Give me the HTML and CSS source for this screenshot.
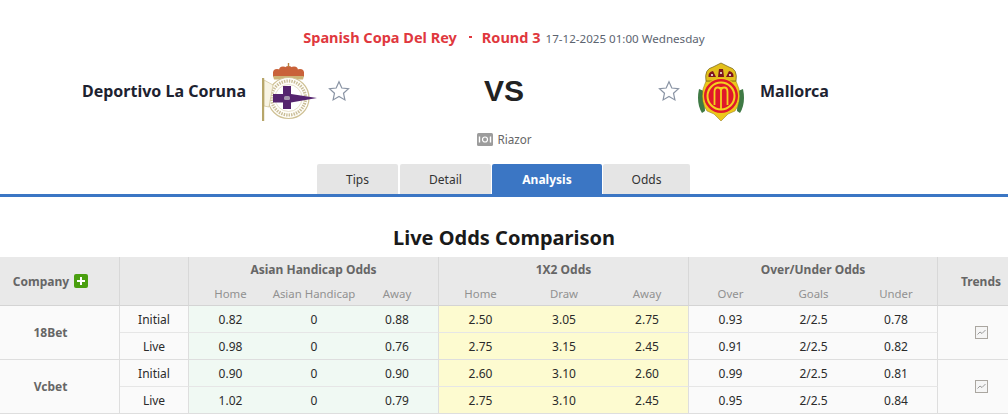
FILE: index.html
```html
<!DOCTYPE html>
<html lang="en">
<head>
<meta charset="utf-8">
<title>Deportivo La Coruna vs Mallorca</title>
<link rel="stylesheet" href="styles.css">
</head>
<body>
<header class="match">
  <div class="meta">
    <span class="league">Spanish Copa Del Rey</span>
    <span class="dot"></span>
    <span class="league">Round 3</span>
    <span class="date">17-12-2025 01:00 Wednesday</span>
  </div>
  <div class="teams">
    <div class="team team-home">
      <span class="team-name">Deportivo La Coruna</span>
      <svg class="crest crest-home" viewBox="0 0 56 62" aria-hidden="true">
        <g fill="#c9623a">
          <circle cx="15" cy="12" r="4"/><circle cx="21" cy="9.500" r="4"/><circle cx="26.500" cy="9" r="4"/><circle cx="32" cy="9.500" r="4"/><circle cx="38" cy="12" r="4"/>
          <rect x="11" y="11" width="31" height="5"/>
        </g>
        <rect x="25.800" y="2" width="1.400" height="4" fill="#b8803f"/>
        <path d="M11 15 H42 L41 18.500 H12 Z" fill="#cdb477"/>
        <circle cx="26.500" cy="37" r="20.500" fill="#fffefa" stroke="#cfc195" stroke-width="1.200"/>
        <circle cx="26.500" cy="37" r="17" fill="none" stroke="#b3a26f" stroke-width="3.200" stroke-dasharray="1.400 1.100" opacity=".7"/>
        <circle cx="26.500" cy="37" r="13.500" fill="#fff" stroke="#ddd3b2" stroke-width=".7"/>
        <path d="M2 19 L11 24 L7 46 L2 45 Z" fill="#f8f4e4" stroke="#cfc195" stroke-width=".7"/>
        <rect x="0" y="17" width="2.200" height="43" fill="#b7a66a"/>
        <path d="M21 25 H29 V33 L55 37 L29 41.500 V48 H21 V41.500 H11 V33 H21 Z" fill="#55246f"/>
        <rect x="22" y="35" width="6" height="4" rx="1.500" fill="#a596ad"/>
      </svg>
      <svg class="star" viewBox="0 0 22 22" aria-hidden="true">
        <path d="M11 1.800 L13.800 8 L20.500 8.700 L15.500 13.200 L16.900 19.900 L11 16.500 L5.100 19.900 L6.500 13.200 L1.500 8.700 L8.200 8 Z"/>
      </svg>
    </div>
    <div class="versus">VS</div>
    <div class="team team-away">
      <svg class="star" viewBox="0 0 22 22" aria-hidden="true">
        <path d="M11 1.800 L13.800 8 L20.500 8.700 L15.500 13.200 L16.900 19.900 L11 16.500 L5.100 19.900 L6.500 13.200 L1.500 8.700 L8.200 8 Z"/>
      </svg>
      <svg class="crest crest-away" viewBox="0 0 48 62" aria-hidden="true">
        <path d="M5 52 Q-1 42 2 28 L7 30 L8 50 Z M43 52 Q49 42 46 28 L41 30 L40 50 Z" fill="#3f7a45"/>
        <path d="M9 20 L6 28 Q4 42 10 50 L17 53 L24 60 L31 53 L38 50 Q44 42 42 28 L39 20 Z" fill="#ecc81c" stroke="#8a7420" stroke-width=".5"/>
        <path d="M9 20 Q7 8 16 6 L24 2 L32 6 Q41 8 39 20 Z" fill="#e3bf1b" stroke="#6f5f18" stroke-width=".7"/>
        <path d="M11.500 16 Q11 11 16 10 L19 16 Z M21 16 L22 8 H26 L27 16 Z M29 16 L32 10 Q37 11 36.500 16 Z" fill="#7d1420"/>
        <circle cx="15" cy="14" r="1.100" fill="#f4eee0"/><circle cx="24" cy="12" r="1.100" fill="#f4eee0"/><circle cx="33" cy="14" r="1.100" fill="#f4eee0"/>
        <circle cx="24" cy="35" r="18.200" fill="#ecc81c"/>
        <circle cx="24" cy="35" r="17" fill="#e0182a"/>
        <circle cx="24" cy="35" r="13.500" fill="none" stroke="#f3d21f" stroke-width="2"/>
        <path d="M17.500 31 V44 M24 26 V48 M30.500 31 V44 M17.500 31 Q17.500 26.500 20.700 26.500 Q24 26.500 24 30 Q24 26.500 27.300 26.500 Q30.500 26.500 30.500 31" fill="none" stroke="#f3d21f" stroke-width="1.800"/>
      </svg>
      <span class="team-name">Mallorca</span>
    </div>
  </div>
  <div class="venue">
    <svg class="venue-icon" viewBox="0 0 16 13" aria-hidden="true">
      <rect width="16" height="13" rx="1.500" fill="#9c9c9c"/>
      <circle cx="8" cy="6.500" r="2.500" fill="none" stroke="#fff" stroke-width="1.200"/>
      <path d="M2.500 3.500 V9.500 M13.500 3.500 V9.500" stroke="#fff" stroke-width="1.400"/>
    </svg>
    <span>Riazor</span>
  </div>
</header>

<nav class="tabs">
  <a class="tab tab-tips">Tips</a>
  <a class="tab tab-detail">Detail</a>
  <a class="tab tab-analysis is-active">Analysis</a>
  <a class="tab tab-odds">Odds</a>
</nav>

<h2 class="section-title">Live Odds Comparison</h2>

<table class="odds">
  <colgroup>
    <col class="c-company"><col class="c-kind">
    <col class="c-a"><col class="c-b"><col class="c-a">
    <col class="c-a"><col class="c-b"><col class="c-a">
    <col class="c-a"><col class="c-a"><col class="c-a">
    <col class="c-trend">
  </colgroup>
  <thead>
    <tr class="head-top">
      <th rowspan="2" class="company-head"><span class="company-label">Company <span class="plus"></span></span></th>
      <th rowspan="2" class="blank-head"></th>
      <th colspan="3" class="group">Asian Handicap Odds</th>
      <th colspan="3" class="group">1X2 Odds</th>
      <th colspan="3" class="group">Over/Under Odds</th>
      <th rowspan="2" class="trend-head">Trends</th>
    </tr>
    <tr class="head-sub">
      <th>Home</th><th>Asian Handicap</th><th class="end">Away</th>
      <th>Home</th><th>Draw</th><th class="end">Away</th>
      <th>Over</th><th>Goals</th><th class="end">Under</th>
    </tr>
  </thead>
  <tbody>
    <tr>
      <td rowspan="2" class="company">18Bet</td><td class="kind">Initial</td>
      <td class="ah">0.82</td><td class="ah">0</td><td class="ah end">0.88</td>
      <td class="x12">2.50</td><td class="x12">3.05</td><td class="x12 end">2.75</td>
      <td class="ou">0.93</td><td class="ou">2/2.5</td><td class="ou end">0.78</td>
      <td rowspan="2" class="trend"><svg class="trend-icon" viewBox="0 0 13 13" aria-hidden="true"><rect x=".5" y=".5" width="12" height="12" fill="#f5f5f5" stroke="#aaa6a0"/><path d="M2.500 8.500 L5 6 L7 7.500 L10.500 4" fill="none" stroke="#9a9a9a"/></svg></td>
    </tr>
    <tr class="group-end">
      <td class="kind">Live</td>
      <td class="ah">0.98</td><td class="ah">0</td><td class="ah end">0.76</td>
      <td class="x12">2.75</td><td class="x12">3.15</td><td class="x12 end">2.45</td>
      <td class="ou">0.91</td><td class="ou">2/2.5</td><td class="ou end">0.82</td>
    </tr>
    <tr>
      <td rowspan="2" class="company">Vcbet</td><td class="kind">Initial</td>
      <td class="ah">0.90</td><td class="ah">0</td><td class="ah end">0.90</td>
      <td class="x12">2.60</td><td class="x12">3.10</td><td class="x12 end">2.60</td>
      <td class="ou">0.99</td><td class="ou">2/2.5</td><td class="ou end">0.81</td>
      <td rowspan="2" class="trend"><svg class="trend-icon" viewBox="0 0 13 13" aria-hidden="true"><rect x=".5" y=".5" width="12" height="12" fill="#f5f5f5" stroke="#aaa6a0"/><path d="M2.500 8.500 L5 6 L7 7.500 L10.500 4" fill="none" stroke="#9a9a9a"/></svg></td>
    </tr>
    <tr class="group-end">
      <td class="kind">Live</td>
      <td class="ah">1.02</td><td class="ah">0</td><td class="ah end">0.79</td>
      <td class="x12">2.75</td><td class="x12">3.10</td><td class="x12 end">2.45</td>
      <td class="ou">0.95</td><td class="ou">2/2.5</td><td class="ou end">0.84</td>
    </tr>
  </tbody>
</table>
</body>
</html>
```

FILE: styles.css
```css
* { box-sizing: border-box; }
html, body { margin: 0; padding: 0; background: #fff; overflow: hidden; }
body { font-family: "Noto Sans", "Liberation Sans", sans-serif; font-size: 12px; color: #333; height: 419px; }

.match { padding-top: 27px; height: 164px; }
.meta { display: flex; justify-content: center; align-items: baseline; height: 20px; line-height: 20px; }
.league { color: #e0383e; font-size: 14.5px; font-weight: 700; }
.dot { width: 3px; height: 2px; background: #e0383e; margin: 0 10px 0 12px; align-self: center; }
.date { color: #5c6470; font-size: 11.6px; margin-left: 5px; }

.teams { display: grid; grid-template-columns: 350px 308px 350px; align-items: center; height: 62px; margin-top: 14px; }
.team { display: flex; align-items: center; }
.team-home { justify-content: flex-end; }
.team-name { color: #1d2230; font-size: 16px; font-weight: 700; padding-bottom: 2px; }
.crest { display: block; flex: none; filter: blur(.3px); }
.crest-home { width: 56px; height: 62px; margin-left: 16px; }
.crest-away { width: 48px; height: 62px; margin-left: 17px; margin-right: 15px; }
.star { width: 22px; height: 22px; flex: none; display: block; margin-bottom: 2px; }
.star path { fill: #fff; stroke: #8a94a4; stroke-width: 1.2; }
.team-home .star { margin-left: 10px; }
.versus { text-align: center; color: #222; font-family: "Liberation Sans", sans-serif; font-size: 30px; font-weight: 700; line-height: 58px; padding-bottom: 2px; }

.venue { display: flex; justify-content: center; align-items: center; gap: 4px; color: #666; font-size: 11.7px; margin-top: 8px; height: 16px; padding-left: 1px; }
.venue-icon { width: 16px; height: 13px; display: block; }

.tabs { display: flex; height: 33px; padding-left: 317px; border-bottom: 3px solid #3b76c4; }
.tab { display: flex; align-items: center; justify-content: center; height: 30px; background: #e5e5e5; color: #333; margin-right: 1px; border-radius: 2px 2px 0 0; }
.tab-tips { width: 81px; margin-right: 2px; }
.tab-detail { width: 91px; }
.tab-analysis { width: 110px; }
.tab-odds { width: 87px; }
.tab.is-active { background: #3b76c4; color: #fff; font-weight: 700; }

.section-title { margin: 0; height: 60px; padding-top: 28px; text-align: center; color: #1a1a1a; font-size: 20px; line-height: 26px; font-weight: 700; }

.odds { width: 1008px; table-layout: fixed; border-collapse: separate; border-spacing: 0; }
.c-company { width: 120px; }
.c-kind { width: 69px; }
.c-a { width: 83px; }
.c-b { width: 84px; }
.c-trend { width: 70px; }

.odds th, .odds td { padding: 0; text-align: center; white-space: nowrap; }
.odds th { background: #e9e9e9; font-weight: 700; color: #666; }
.head-top th { height: 26px; padding-bottom: 2px; }
.head-top .group, .blank-head, .company-head { border-right: 1px solid #d8d8d8; }
.head-sub th { height: 23px; padding-bottom: 2px; font-size: 11.4px; font-weight: 400; color: #919191; border-bottom: 1px solid #d4d4d4; }
.head-sub th.end { border-right: 1px solid #d8d8d8; }
.company-head, .blank-head, .trend-head { border-bottom: 1px solid #d4d4d4; }
.odds .company-head { padding: 0 18px 0 0; }
.odds .trend-head { padding: 0 0 0 16px; }
.company-label { display: inline-flex; align-items: center; gap: 5px; }
.plus { position: relative; display: inline-block; width: 14px; height: 14px; border-radius: 2px; background: #4a9f10; }
.plus::before, .plus::after { content: ""; position: absolute; background: #fff; }
.plus::before { left: 3px; top: 6px; width: 8px; height: 2px; }
.plus::after { left: 6px; top: 3px; width: 2px; height: 8px; }

.odds td { height: 27px; border-bottom: 1px solid #e6e6e6; color: #2b2b2b; }
.odds .company { background: #fafafa; color: #666; font-weight: 700; border-right: 1px solid #dedede; border-bottom-color: #dedede; padding-right: 18px; }
.group-end td { border-bottom-color: #dedede; }
.kind { background: #fafafa; border-right: 1px solid #dedede; }
.ah { background: #f0f9f3; }
.x12 { background: #fdfbd0; }
.ou { background: #fafafa; }
td.end { border-right: 1px solid #dedede; }
.odds .trend { background: #fafafa; border-bottom-color: #dedede; padding-left: 16px; }
.trend-icon { display: block; width: 13px; height: 13px; margin: 0 auto; }
```
